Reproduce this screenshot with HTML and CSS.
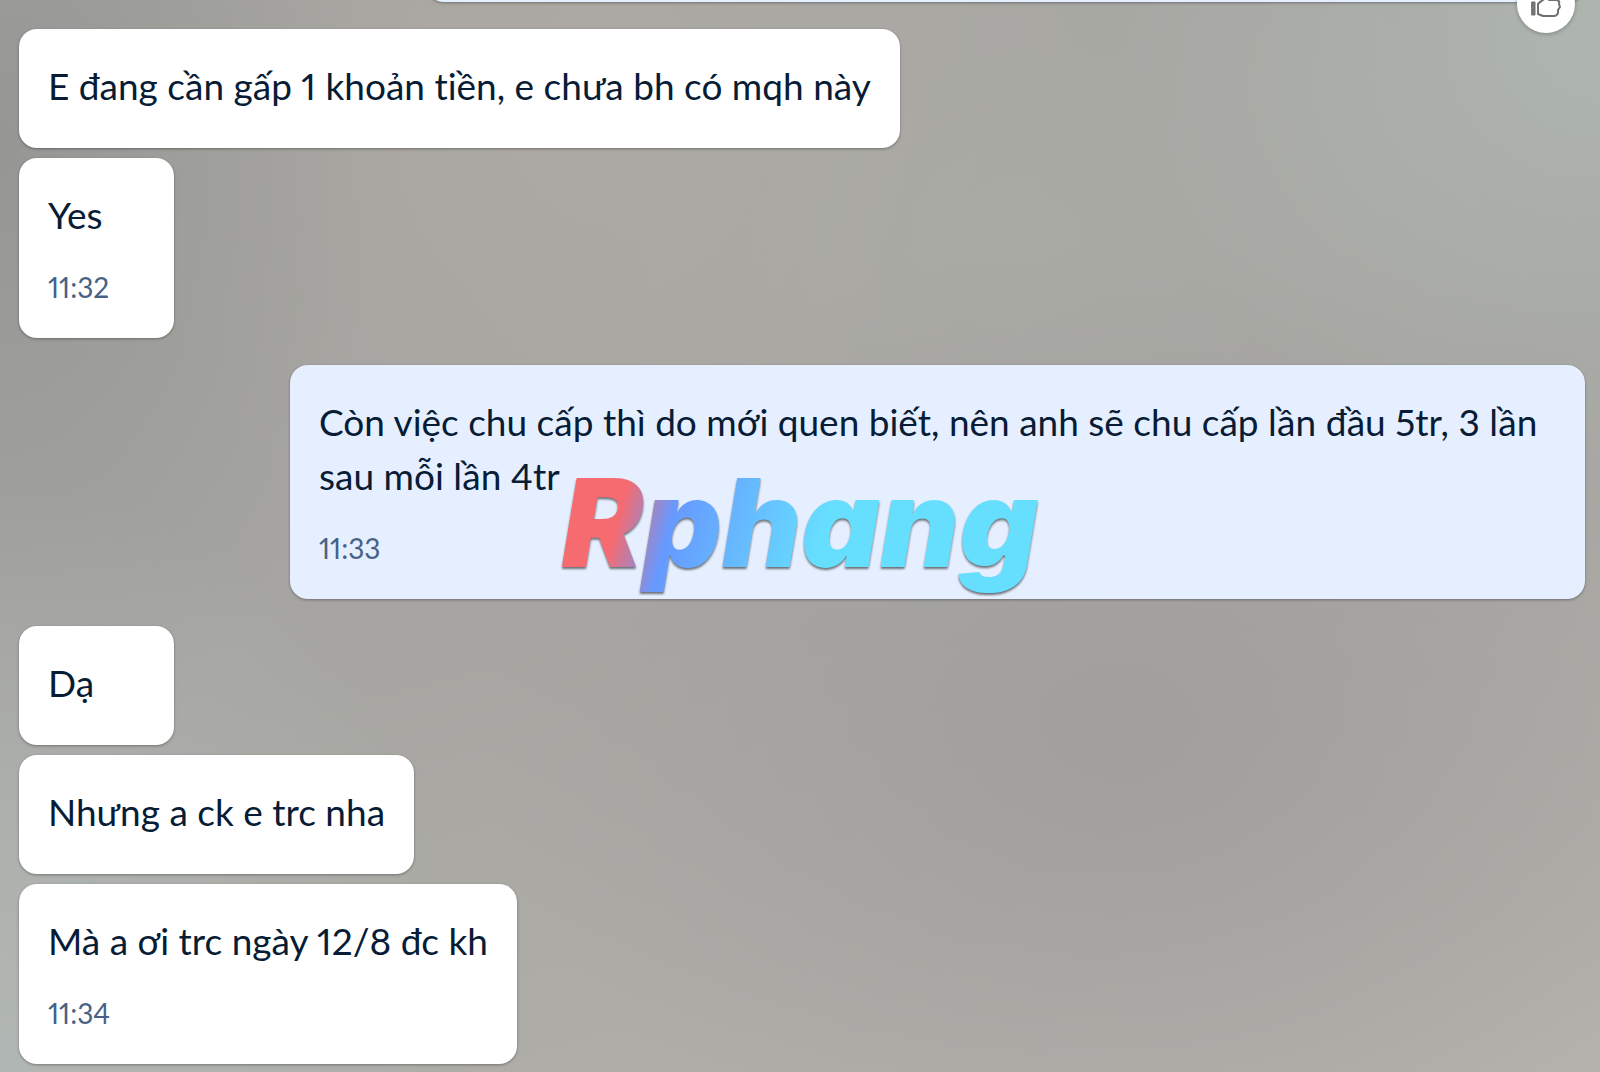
FILE: index.html
```html
<!DOCTYPE html>
<html lang="vi">
<head>
<meta charset="utf-8">
<meta name="viewport" content="width=device-width, initial-scale=1">
<title>Chat</title>
<link rel="stylesheet" href="styles.css">
</head>
<body>
<main class="chat">
  <section class="group group-sent">
    <div class="bubble sent previous">
      <button class="react" type="button" aria-label="Like">
        <svg viewBox="0 0 32 32" width="32" height="32" fill="none" stroke="#6f6f6f" stroke-width="2" stroke-linejoin="round" stroke-linecap="round">
          <rect x="2" y="14" width="3" height="13" fill="#777" stroke-width="1"/>
          <path d="M8 16 L10 14 Q14 12 15 9 L16 3 Q20 2 20 8 L19 12 H27 Q30 13 29 16 L30 19 L28 22 L28 25 Q27 28 24 28 H13 L8 26 Z"/>
        </svg>
      </button>
    </div>
  </section>
  <section class="group">
    <article class="bubble"><p class="text">E đang cần gấp 1 khoản tiền, e chưa bh có mqh này</p></article>
    <article class="bubble"><p class="text">Yes</p><time class="time">11:32</time></article>
  </section>
  <section class="group group-sent">
    <article class="bubble sent"><p class="text">Còn việc chu cấp thì do mới quen biết, nên anh sẽ chu cấp lần đầu 5tr, 3 lần sau mỗi lần 4tr</p><time class="time">11:33</time></article>
  </section>
  <section class="group">
    <article class="bubble"><p class="text">Dạ</p></article>
    <article class="bubble"><p class="text">Nhưng a ck e trc nha</p></article>
    <article class="bubble"><p class="text">Mà a ơi trc ngày 12/8 đc kh</p><time class="time">11:34</time></article>
  </section>
</main>
<div class="watermark"><span class="brand">Rphang</span></div>
</body>
</html>
```
FILE: styles.css
```css
* { box-sizing: border-box; }

body {
  margin: 0;
  font-family: Lato, "Noto Sans", sans-serif;
  font-variant-ligatures: none;
  font-variant-numeric: proportional-nums;
  color: #081c36;
  background:
    radial-gradient(ellipse 30% 55% at 0% 100%, #b1b7b4 0%, #b1b7b400 100%),
    radial-gradient(ellipse 24% 60% at 0% 14%, #969795 0%, #96979500 100%),
    radial-gradient(ellipse 30% 40% at 100% 4%, #aeb5af 0%, #aeb5af00 100%),
    radial-gradient(ellipse 40% 45% at 70% 68%, #a09f9d 0%, #a09f9d00 100%),
    radial-gradient(ellipse 35% 40% at 64% 22%, #aaaaa5 0%, #aaaaa500 100%),
    radial-gradient(ellipse 30% 50% at 38% 10%, #ada9a4 0%, #ada9a400 100%),
    linear-gradient(165deg, #a6a5a1 0%, #a6a5a1 50%, #b3b2ac 100%);
}

.chat {
  display: flex;
  flex-direction: column;
  justify-content: flex-end;
  gap: 27px;
  height: 100vh;
  padding: 0 15px 8px 19px;
  overflow: hidden;
}

.group {
  display: flex;
  flex-direction: column;
  flex-shrink: 0;
  align-items: flex-start;
  gap: 10px;
}

.group-sent { align-items: flex-end; }

.bubble {
  min-width: 155px;
  max-width: 1295px;
  padding: 30px 29px 35px;
  border-radius: 18px;
  background: #fff;
  box-shadow: 0 1px 3px #0005;
}

.sent { background: #e5efff; }

.previous {
  position: relative;
  width: 74%;
  height: 119px;
}

.react {
  position: absolute;
  right: 10px;
  bottom: -31px;
  display: flex;
  align-items: center;
  justify-content: center;
  width: 58px;
  height: 58px;
  padding: 0;
  border: 0;
  border-radius: 50%;
  background: #fff;
  box-shadow: 0 1px 4px #0004;
}

.text {
  margin: 0;
  font-size: 37px;
  line-height: 54px;
}

.time {
  display: block;
  margin-top: 29px;
  font-size: 28px;
  line-height: 32px;
  color: #476285;
}

.watermark {
  position: fixed;
  inset: 0;
  display: flex;
  align-items: center;
  justify-content: center;
  padding-bottom: 26px;
  pointer-events: none;
}

.brand {
  padding: 0 12px;
  font: italic 900 122px/144px Inter, sans-serif;
  color: transparent;
  background: linear-gradient(105deg, #f56b70 0 16%, #6699ff 26%, #66dfff 55%);
  background-clip: text;
  filter: drop-shadow(0 2px 1px #0008);
}
```
